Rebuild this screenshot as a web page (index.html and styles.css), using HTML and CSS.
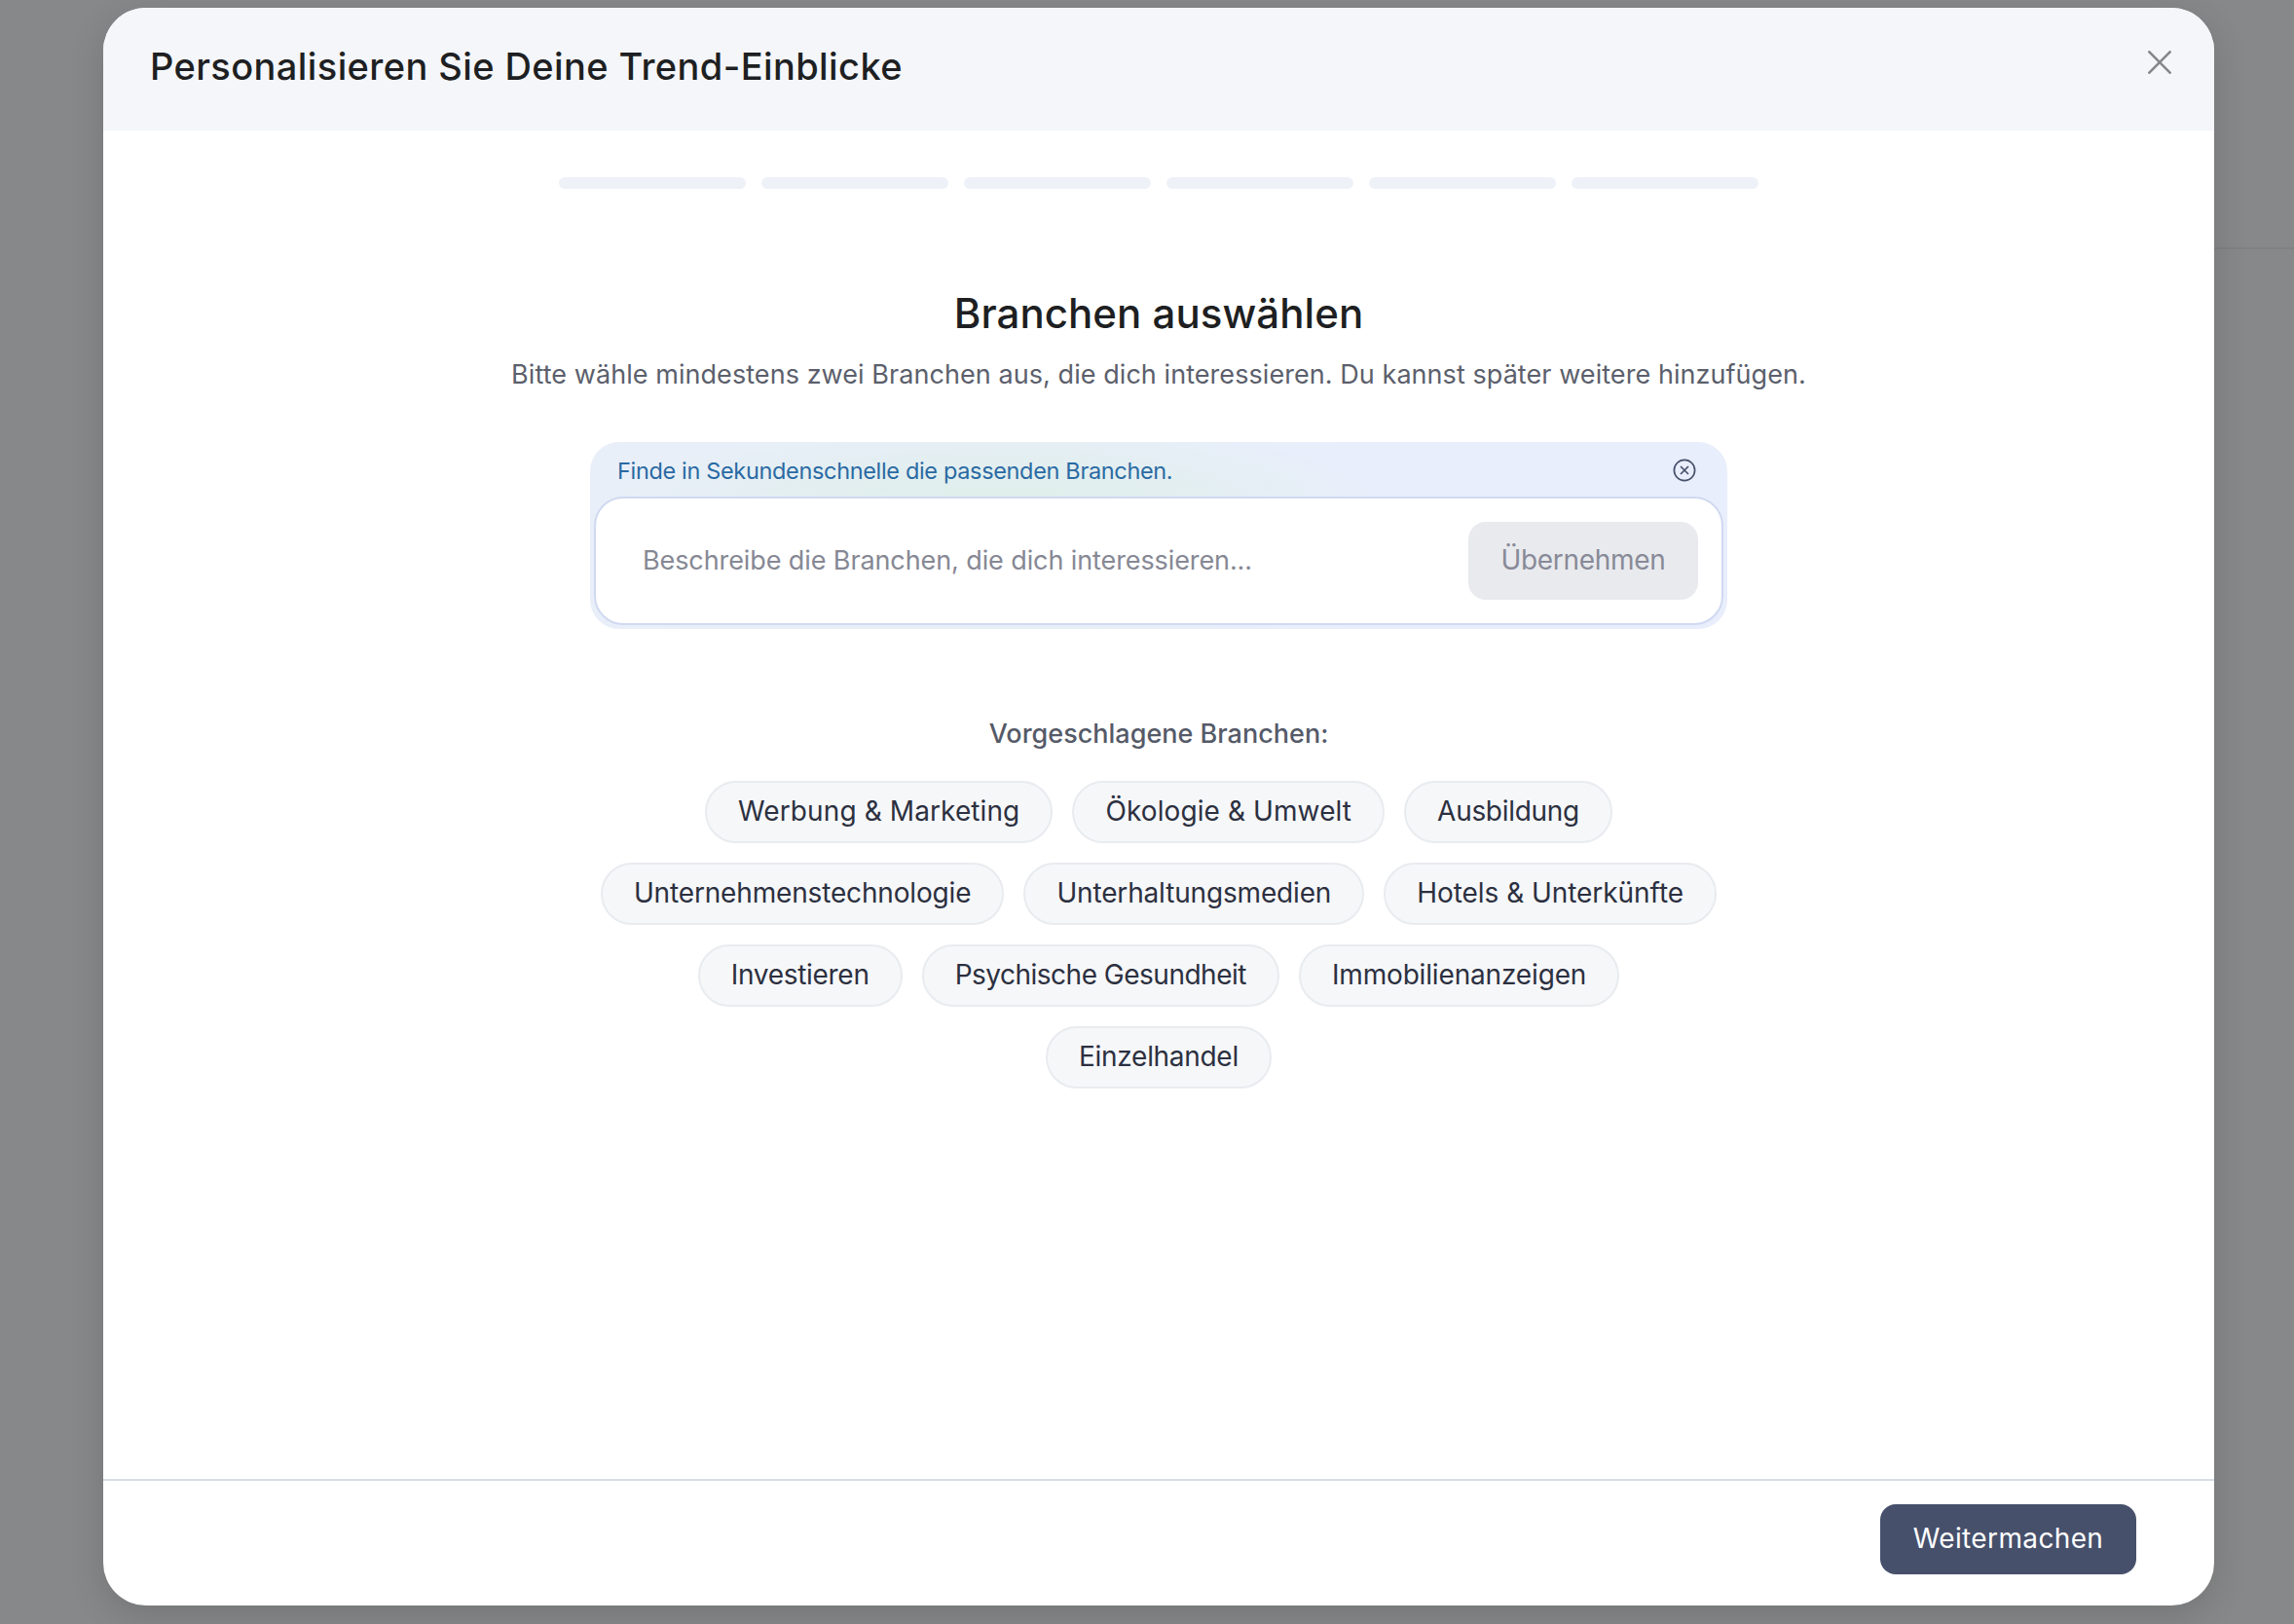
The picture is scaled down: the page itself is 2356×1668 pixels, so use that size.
FILE: index.html
```html
<!DOCTYPE html>
<html lang="de">
<head>
<meta charset="utf-8">
<title>Personalisieren Sie Deine Trend-Einblicke</title>
<link rel="stylesheet" href="styles.css">
</head>
<body>
<div class="backdrop-line"></div>
<div class="modal">
  <header class="modal-head">
    <h1 class="modal-title">Personalisieren Sie Deine Trend-Einblicke</h1>
    <svg class="close-icon" viewBox="0 0 24 24" width="24" height="24"><path d="M0.5 0.5 L23.5 23.5 M23.5 0.5 L0.5 23.5"/></svg>
  </header>
  <main class="modal-body">
    <div class="progress">
      <span class="step"></span><span class="step"></span><span class="step"></span><span class="step"></span><span class="step"></span><span class="step"></span>
    </div>
    <h2 class="heading">Branchen auswählen</h2>
    <p class="sub">Bitte wähle mindestens zwei Branchen aus, die dich interessieren. Du kannst später weitere hinzufügen.</p>
    <section class="ai-card">
      <div class="ai-top">
        <span class="ai-label">Finde in Sekundenschnelle die passenden Branchen.</span>
        <svg class="ai-close" viewBox="0 0 24 24" width="24" height="24"><circle cx="12" cy="12" r="10.6"/><path d="M8 8 L16 16 M16 8 L8 16"/></svg>
      </div>
      <div class="ai-input">
        <span class="placeholder">Beschreibe die Branchen, die dich interessieren...</span>
        <span class="apply">Übernehmen</span>
      </div>
    </section>
    <h3 class="suggest">Vorgeschlagene Branchen:</h3>
    <div class="chips">
      <span class="chip chip-wide">Werbung &amp; Marketing</span>
      <span class="chip chip-wide">Ökologie &amp; Umwelt</span>
      <span class="chip chip-snug">Ausbildung</span>
      <span class="chip chip-mid">Unternehmenstechnologie</span>
      <span class="chip chip-mid">Unterhaltungsmedien</span>
      <span class="chip">Hotels &amp; Unterkünfte</span>
      <span class="chip chip-snug">Investieren</span>
      <span class="chip chip-tight">Psychische Gesundheit</span>
      <span class="chip chip-mid">Immobilienanzeigen</span>
      <span class="chip chip-snug">Einzelhandel</span>
    </div>
  </main>
  <footer class="modal-foot">
    <span class="next">Weitermachen</span>
  </footer>
</div>
</body>
</html>
```
FILE: styles.css
```css
* { box-sizing: border-box; }
html, body { margin: 0; height: 100%; }
body {
  height: 1668px;
  overflow: hidden;
  padding: 8px 82px 19px 106px;
  background: #878889;
  font-family: "Inter", "Liberation Sans", sans-serif;
  color: #1f2023;
  position: relative;
}
.backdrop-line {
  position: absolute;
  left: 2274px; right: 0; top: 254px;
  height: 2px;
  background: #808182;
}
.modal {
  position: relative;
  height: 1641px;
  background: #fff;
  border-radius: 44px;
  overflow: hidden;
  display: flex;
  flex-direction: column;
  box-shadow: 0 10px 36px rgba(0,0,0,.14);
}
.modal-head {
  height: 126px;
  flex: none;
  background: #f4f6fa;
  padding: 37px 44px 0 48px;
  display: flex;
  justify-content: space-between;
  align-items: flex-start;
}
.modal-title {
  margin: 0;
  font-size: 38px;
  line-height: 46px;
  font-weight: 500;
  letter-spacing: .4px;
  color: #1e1f22;
}
.close-icon { margin-top: 7px; fill: none; stroke: #858789; stroke-width: 2.6; }
.modal-body {
  flex: 1;
  display: flex;
  flex-direction: column;
  align-items: center;
  padding-top: 48px;
}
.progress { display: flex; gap: 16px; }
.step { width: 192px; height: 12px; border-radius: 6px; background: #eef1f8; }
.heading {
  margin: 103px 0 0;
  font-size: 42px;
  line-height: 50px;
  font-weight: 500;
  letter-spacing: .05px;
  color: #1e1f22;
}
.sub {
  margin: 19px 0 0;
  font-size: 27px;
  line-height: 38px;
  letter-spacing: .06px;
  color: #5c5f6c;
}
.ai-card {
  margin-top: 50px;
  width: 1168px;
  height: 192px;
  padding: 0 4px 4px;
  border-radius: 30px;
  display: flex;
  flex-direction: column;
  background:
    radial-gradient(ellipse 420px 70px at 36% 30%, #dfeeea 0%, rgba(223,238,234,0) 100%),
    linear-gradient(90deg, #e9eff9 0%, #e6eff6 40%, #e9eefc 68%, #e9eefc 100%);
}
.ai-top {
  height: 56px;
  flex: none;
  display: flex;
  align-items: center;
  justify-content: space-between;
  padding: 2px 28px 0 24px;
}
.ai-label { font-size: 23.5px; letter-spacing: -.34px; color: #2a6aa3; }
.ai-close { fill: none; stroke: #46506b; stroke-width: 1.7; }
.ai-input {
  flex: 1;
  background: #fff;
  border: 2px solid #d0d9f0;
  border-radius: 30px;
  display: flex;
  align-items: center;
  justify-content: space-between;
  padding: 0 24px 0 48px;
}
.placeholder { font-size: 27px; letter-spacing: -.1px; color: #868894; margin-bottom: 2px; }
.apply {
  width: 236px;
  height: 80px;
  padding-bottom: 2px;
  border-radius: 18px;
  background: #e9eaee;
  color: #888a97;
  font-size: 28px;
  letter-spacing: -.3px;
  display: flex;
  align-items: center;
  justify-content: center;
}
.suggest {
  margin: 91px 0 0;
  font-size: 27px;
  line-height: 34px;
  font-weight: 500;
  color: #555a68;
}
.chips {
  margin-top: 31px;
  width: 1168px;
  display: flex;
  flex-wrap: wrap;
  justify-content: center;
  gap: 20px;
}
.chip {
  height: 64px;
  padding: 0 32px 2px;
  border: 2px solid #e9ebef;
  border-radius: 32px;
  background: #f6f7f9;
  color: #2c3040;
  font-size: 28px;
  letter-spacing: -.05px;
  display: flex;
  align-items: center;
}
.chip-wide { letter-spacing: .1px; }
.chip-mid { letter-spacing: -.16px; }
.chip-snug { letter-spacing: -.3px; }
.chip-tight { letter-spacing: -.5px; }
.modal-foot {
  flex: none;
  height: 130px;
  border-top: 2px solid #d8dde6;
  display: flex;
  justify-content: flex-end;
  padding: 24px 80px 0 0;
}
.next {
  width: 263px;
  height: 72px;
  padding-bottom: 2px;
  border-radius: 16px;
  background: #46506b;
  color: #fff;
  font-size: 28px;
  letter-spacing: .37px;
  display: flex;
  align-items: center;
  justify-content: center;
}
```
